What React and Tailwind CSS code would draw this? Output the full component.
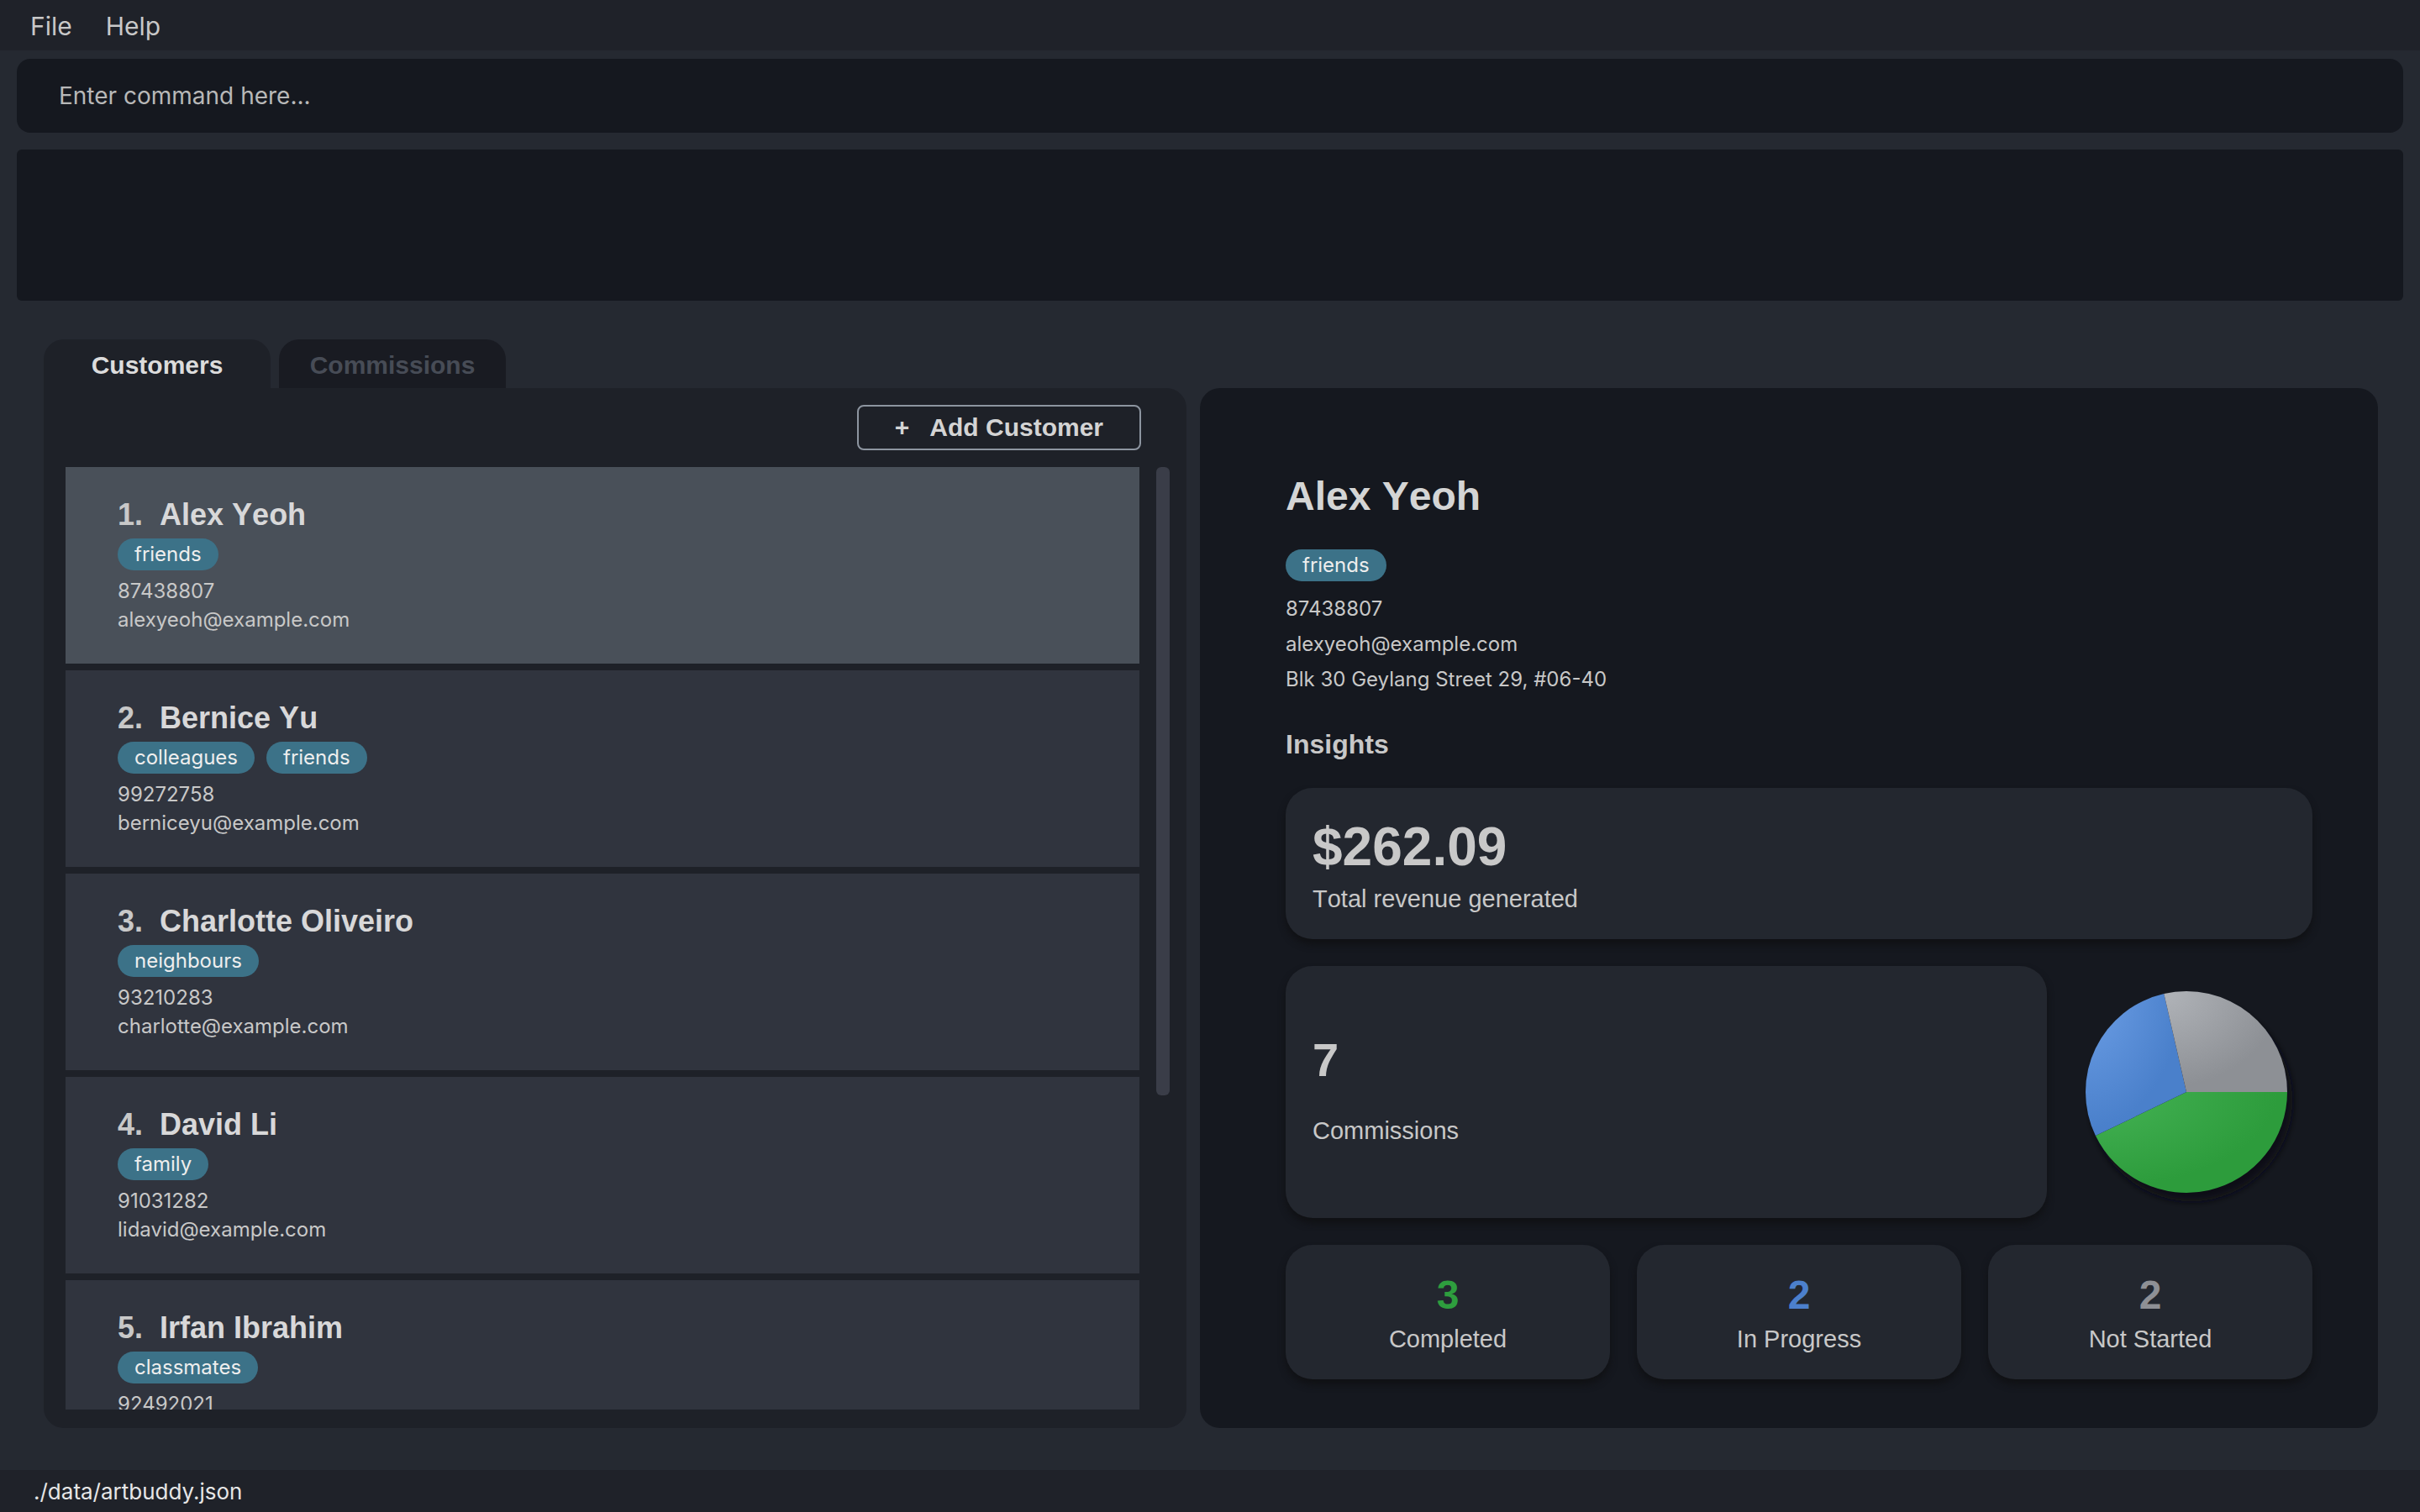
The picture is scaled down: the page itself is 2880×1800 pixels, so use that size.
import React from "react";

const customers = [
  { name: "Alex Yeoh", tags: ["friends"], phone: "87438807", email: "alexyeoh@example.com" },
  { name: "Bernice Yu", tags: ["colleagues", "friends"], phone: "99272758", email: "berniceyu@example.com" },
  { name: "Charlotte Oliveiro", tags: ["neighbours"], phone: "93210283", email: "charlotte@example.com" },
  { name: "David Li", tags: ["family"], phone: "91031282", email: "lidavid@example.com" },
  { name: "Irfan Ibrahim", tags: ["classmates"], phone: "92492021" },
];

const stats = [
  { value: 3, label: "Completed", color: "text-[#2e9e3e]" },
  { value: 2, label: "In Progress", color: "text-[#4c80cc]" },
  { value: 2, label: "Not Started", color: "text-[#8e9095]" },
];

const heading = "font-['Liberation_Sans',sans-serif] [font-kerning:none]";
const card = "rounded-[32px] bg-[#23272f] shadow-[0_6px_8px_#101114]";

function Tag({ children }) {
  return (
    <span className="h-[38px] rounded-full bg-[#3c7288] px-5 text-2xl leading-[38px] text-[#eeeeee]">
      {children}
    </span>
  );
}

function CustomerCard({ customer, index, selected }) {
  return (
    <li
      className={
        "shrink-0 px-[62px] pt-[37px] pb-[35px] " + (selected ? "bg-[#495059]" : "bg-[#30343e]")
      }
    >
      <h2 className={heading + " flex gap-5 text-4xl leading-10 font-bold text-[#d8d8d9]"}>
        <span className="text-[#c8c8c8]">{index}.</span>
        <span>{customer.name}</span>
      </h2>
      <div className="mt-2 flex gap-3.5">
        {customer.tags.map((t) => (
          <Tag key={t}>{t}</Tag>
        ))}
      </div>
      <p className="mt-2">{customer.phone}</p>
      {customer.email && <p>{customer.email}</p>}
    </li>
  );
}

const R = 120;
const point = (deg) => {
  const a = (deg * Math.PI) / 180;
  return `${(150 + R * Math.cos(a)).toFixed(2)} ${(150 + R * Math.sin(a)).toFixed(2)}`;
};
const slice = (from, to) => `M150 150 L${point(from)} A${R} ${R} 0 0 1 ${point(to)} Z`;

function PieChart() {
  const slices = [
    { id: "completed", from: 0, to: 154.29, light: "#45b355", dark: "#2d9c3c" },
    { id: "progress", from: 154.29, to: 257.14, light: "#6d9fe6", dark: "#4a80cb" },
    { id: "pending", from: 257.14, to: 360, light: "#b1b4b9", dark: "#8d9095" },
  ];
  return (
    <svg viewBox="0 0 300 300" className="size-[300px] shrink-0" role="img" aria-label="Commission status chart">
      <defs>
        {slices.map((s) => (
          <radialGradient key={s.id} id={s.id} cx="0" cy="0" r="0.95">
            <stop offset="0" stopColor={s.light} />
            <stop offset="1" stopColor={s.dark} />
          </radialGradient>
        ))}
        <filter id="soft" x="-20%" y="-20%" width="140%" height="140%">
          <feGaussianBlur stdDeviation="4" />
        </filter>
      </defs>
      <circle cx="156" cy="160" r="120" fill="#101114" filter="url(#soft)" />
      {slices.map((s) => (
        <path key={s.id} d={slice(s.from, s.to)} fill={`url(#${s.id})`} />
      ))}
    </svg>
  );
}

export default function App() {
  return (
    <div className="flex h-screen flex-col overflow-hidden bg-[#252931] font-[Inter,sans-serif] text-[#c8c8c8]">
      <nav className="flex h-[60px] shrink-0 items-center gap-10 bg-[#1f2229] px-9 pt-0.5 text-3xl">
        <button type="button">File</button>
        <button type="button">Help</button>
      </nav>

      <div className="flex shrink-0 flex-col gap-5 px-5 pt-2.5">
        <input
          type="text"
          aria-label="Command"
          placeholder="Enter command here..."
          className="h-[88px] w-full rounded-2xl bg-[#15181f] px-[50px] text-[28px] text-[#b8b8b8] outline-none placeholder:text-[#b8b8b8]"
        />
        <textarea
          readOnly
          aria-label="Command result"
          className="block h-[180px] w-full resize-none rounded-md bg-[#15181f] px-[50px] py-5 text-[28px] outline-none"
        />
      </div>

      <main className="flex min-h-0 flex-1 flex-col pt-[46px] pr-[50px] pb-[50px] pl-[52px]">
        <div role="tablist" className={heading + " flex h-[58px] shrink-0 gap-2.5 text-3xl font-bold"}>
          <button type="button" role="tab" aria-selected="true" className="w-[270px] rounded-t-3xl bg-[#1e2128] pt-1 text-[#dcdcdc]">
            Customers
          </button>
          <button type="button" role="tab" aria-selected="false" className="w-[270px] rounded-t-3xl bg-[#191b22] pt-1 text-[#474c56]">
            Commissions
          </button>
        </div>

        <div className="grid min-h-0 flex-1 grid-cols-[680fr_701fr] gap-4">
          <section className="flex min-h-0 flex-col rounded-3xl rounded-tl-none bg-[#1e2128] pt-5 pb-[22px]">
            <button
              type="button"
              className={
                heading +
                " mr-[54px] flex h-[54px] shrink-0 items-center gap-6 self-end rounded-lg border-2 border-[#8d95a0] px-[43px] text-3xl font-bold text-[#d4d4d4]"
              }
            >
              <span>+</span>
              <span>Add Customer</span>
            </button>
            <div className="mt-5 flex min-h-0 flex-1 gap-5 pr-5 pl-[26px]">
              <ul className="flex min-h-0 flex-1 flex-col gap-2 overflow-hidden text-2xl leading-[34px]">
                {customers.map((c, i) => (
                  <CustomerCard key={c.name} customer={c} index={i + 1} selected={i === 0} />
                ))}
              </ul>
              <div className="w-4">
                <div className="h-2/3 rounded-md bg-[#3a3d48]" />
              </div>
            </div>
          </section>

          <section className="min-h-0 overflow-hidden rounded-3xl bg-[#15181f] pt-[101px] pr-[78px] pl-[102px]">
            <h1 className={heading + " text-5xl leading-14 font-bold text-[#d4d5d5]"}>Alex Yeoh</h1>
            <div className="mt-[35px] flex">
              <Tag>friends</Tag>
            </div>
            <div className="mt-3 text-2xl leading-[42px]">
              <p>87438807</p>
              <p>alexyeoh@example.com</p>
              <p>Blk 30 Geylang Street 29, #06-40</p>
            </div>

            <div className={heading + " mt-9"}>
              <h2 className="text-[32px] leading-10 font-bold">Insights</h2>
              <div className={card + " mt-8 px-8 pt-[34px] pb-7"}>
                <p className="text-[64px] leading-[72px] font-bold">$262.09</p>
                <p className="mt-1.5 text-[29px] leading-10">Total revenue generated</p>
              </div>
              <div className="mt-8 flex gap-4">
                <div className={card + " flex-1 px-8 pt-20"}>
                  <p className="text-[56px] leading-16 font-bold">7</p>
                  <p className="mt-8 text-[29px] leading-10">Commissions</p>
                </div>
                <PieChart />
              </div>
              <div className="mt-8 grid grid-cols-3 gap-8 text-center">
                {stats.map((s) => (
                  <div key={s.label} className={card + " pt-8 pb-7"}>
                    <p className={"text-5xl leading-14 font-bold " + s.color}>{s.value}</p>
                    <p className="mt-1 text-[29px] leading-10">{s.label}</p>
                  </div>
                ))}
              </div>
            </div>
          </section>
        </div>
      </main>

      <footer className="h-[50px] shrink-0 bg-[#1f2229] px-10 text-[26px] leading-[52px] text-[#e6e6e6]">
        ./data/artbuddy.json
      </footer>
    </div>
  );
}
